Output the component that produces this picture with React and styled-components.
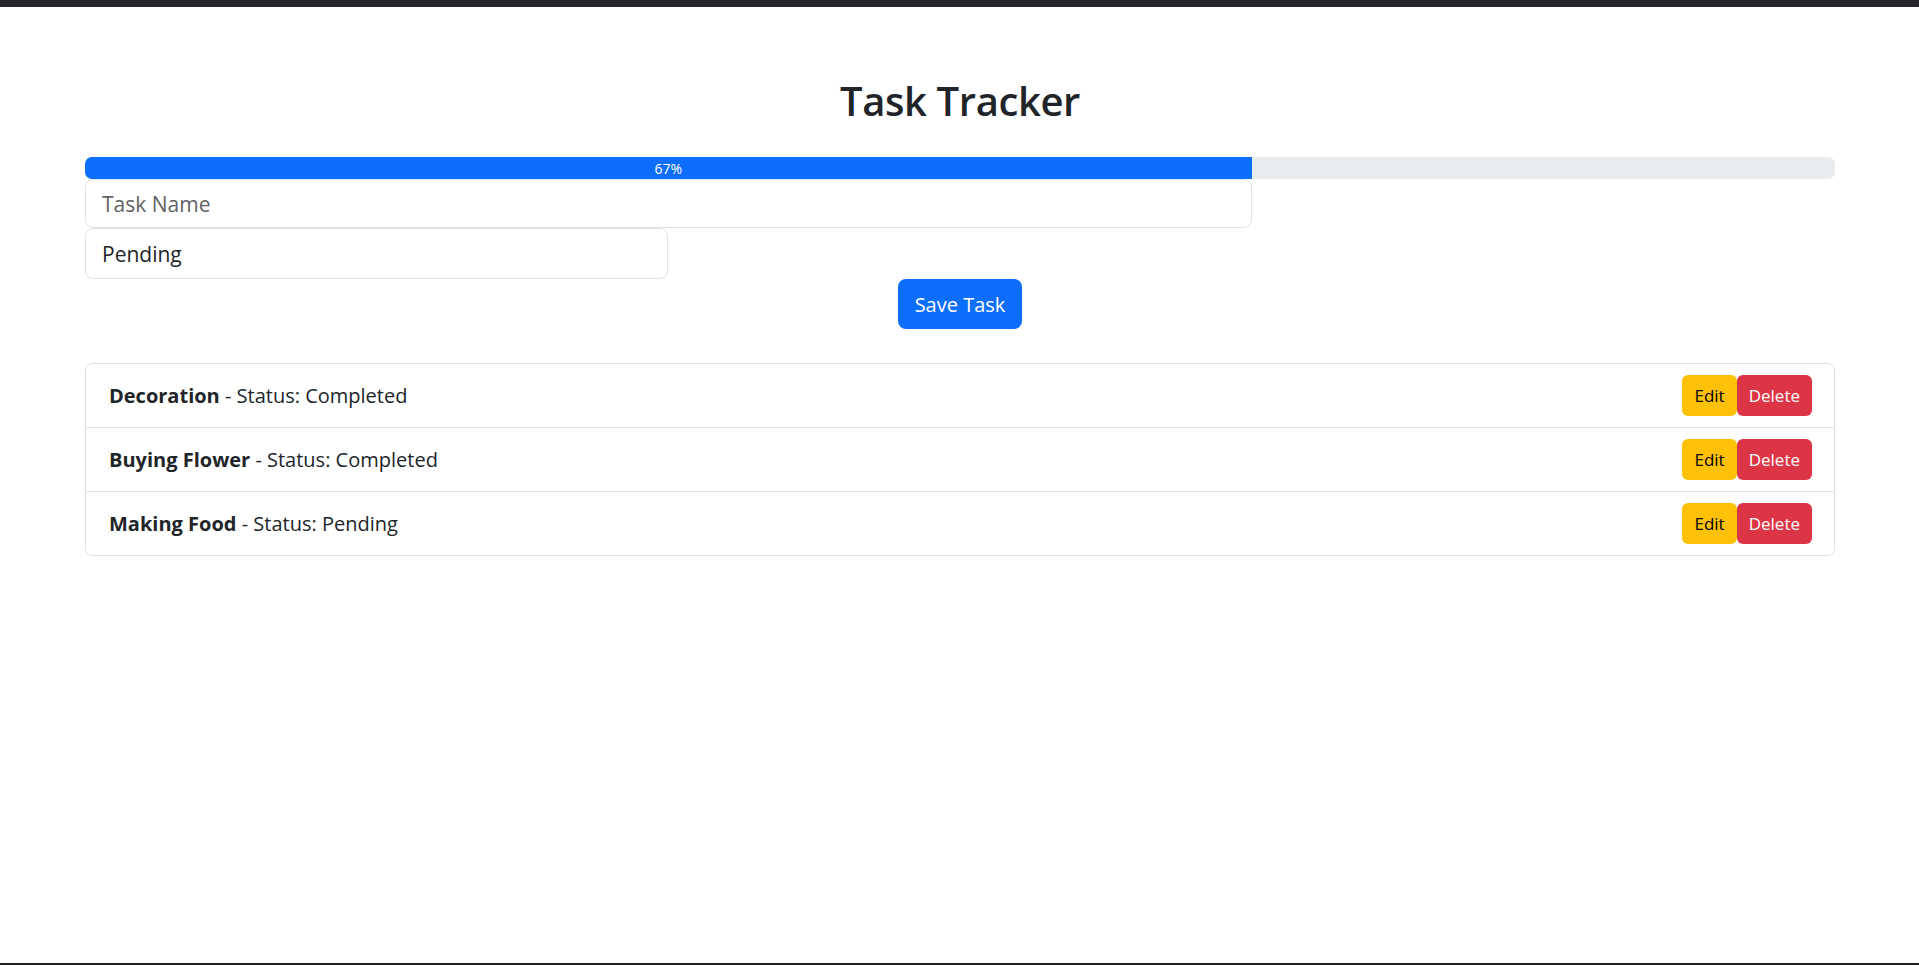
import React, { useState } from 'react'
import styled, { createGlobalStyle } from 'styled-components'

const initialTasks = [
  { id: 1, name: 'Decoration', status: 'Completed' },
  { id: 2, name: 'Buying Flower', status: 'Completed' },
  { id: 3, name: 'Making Food', status: 'Pending' },
]

const App = () => {
  const [tasks, setTasks] = useState(initialTasks)
  const [name, setName] = useState('')
  const [status, setStatus] = useState('Pending')
  const [editId, setEditId] = useState(null)

  const done = tasks.filter((t) => t.status === 'Completed').length
  const percent = tasks.length ? (done / tasks.length) * 100 : 0

  const saveTask = () => {
    if (!name.trim()) return
    if (editId) {
      setTasks(tasks.map((t) => (t.id === editId ? { ...t, name, status } : t)))
      setEditId(null)
    } else {
      setTasks([...tasks, { id: Date.now(), name, status }])
    }
    setName('')
    setStatus('Pending')
  }

  const editTask = (task) => {
    setEditId(task.id)
    setName(task.name)
    setStatus(task.status)
  }

  const deleteTask = (id) => {
    setTasks(tasks.filter((t) => t.id !== id))
  }

  return (
    <Page>
      <GlobalStyle />
      <TopStrip />
      <Main>
        <Title>Task Tracker</Title>
        <Progress>
          <ProgressFill style={{ width: `${percent}%` }}>
            {Math.round(percent)}%
          </ProgressFill>
        </Progress>
        <Form>
          <TextInput
            type='text'
            placeholder='Task Name'
            value={name}
            onChange={(e) => setName(e.target.value)}
          />
          <StatusSelect value={status} onChange={(e) => setStatus(e.target.value)}>
            <option value='Pending'>Pending</option>
            <option value='Completed'>Completed</option>
          </StatusSelect>
          <SaveButton onClick={saveTask}>Save Task</SaveButton>
        </Form>
        <TaskList>
          {tasks.map((task) => (
            <TaskItem key={task.id}>
              <TaskText>
                <strong>{task.name}</strong> - Status: {task.status}
              </TaskText>
              <Actions>
                <ActionButton variant='edit' onClick={() => editTask(task)}>Edit</ActionButton>
                <ActionButton variant='delete' onClick={() => deleteTask(task.id)}>Delete</ActionButton>
              </Actions>
            </TaskItem>
          ))}
        </TaskList>
      </Main>
      <BottomLine />
    </Page>
  )
}

export default App

const GlobalStyle = createGlobalStyle`
  body {
    margin: 0;
    background: #fff;
    color: #212529;
    font-family: "Open Sans", "Noto Sans", "Liberation Sans", sans-serif;
  }
  * {
    box-sizing: border-box;
  }
`

const Page = styled.div`
  height: 100vh;
  overflow: hidden;
  display: flex;
  flex-direction: column;
`

const TopStrip = styled.div`
  flex: none;
  height: 7px;
  background-color: #25252b;
`

const BottomLine = styled.div`
  flex: none;
  height: 2px;
  background-color: #1f1f22;
`

const Main = styled.main`
  flex: 1;
  padding: 0 84px 0 85px;
`

const Title = styled.h1`
  margin: 70px 0 32px;
  text-align: center;
  font-size: 40px;
  font-weight: 600;
  line-height: 1.2;
  letter-spacing: -0.4px;
`

const Progress = styled.div`
  display: flex;
  height: 22px;
  overflow: hidden;
  border-radius: 7px;
  background-color: #e9ecef;
`

const ProgressFill = styled.div`
  display: flex;
  align-items: center;
  justify-content: center;
  background-color: #0d6efd;
  color: #fff;
  font-size: 14px;
  white-space: nowrap;
`

const Form = styled.div`
  display: flex;
  flex-direction: column;
  align-items: flex-start;
`

const fieldStyle = `
  display: block;
  padding: 0 16px;
  border: 1px solid #dee2e6;
  border-radius: 8px;
  background-color: #fff;
  color: #212529;
  font-family: inherit;
  font-size: 21px;
  outline: none;
`

const TextInput = styled.input`
  ${fieldStyle}
  width: 66.6667%;
  height: 49px;
  &::placeholder {
    color: #5f6266;
  }
`

const StatusSelect = styled.select`
  ${fieldStyle}
  width: 33.3333%;
  height: 51px;
  appearance: none;
  -webkit-appearance: none;
`

const SaveButton = styled.button`
  align-self: center;
  height: 50px;
  padding: 0 17px;
  border: none;
  border-radius: 8px;
  background-color: #0d6efd;
  color: #fff;
  font-family: inherit;
  font-size: 20px;
  cursor: pointer;
`

const TaskList = styled.ul`
  margin: 34px 0 0;
  padding: 0;
  list-style: none;
  border: 1px solid #dee2e6;
  border-radius: 7px;
`

const TaskItem = styled.li`
  display: flex;
  align-items: center;
  justify-content: space-between;
  padding: 11px 22px 11px 23px;
  border-bottom: 1px solid #dee2e6;
  &:last-child {
    border-bottom: none;
  }
`

const TaskText = styled.div`
  font-size: 20px;
  & strong {
    font-weight: 700;
  }
`

const Actions = styled.div`
  display: flex;
`

const ActionButton = styled.button`
  height: 41px;
  padding: 0 12px;
  border: none;
  border-radius: 6px;
  font-family: inherit;
  font-size: 17px;
  cursor: pointer;
  background-color: ${(p) => (p.variant === 'edit' ? '#ffc107' : '#dc3545')};
  color: ${(p) => (p.variant === 'edit' ? '#000' : '#fff')};
`
